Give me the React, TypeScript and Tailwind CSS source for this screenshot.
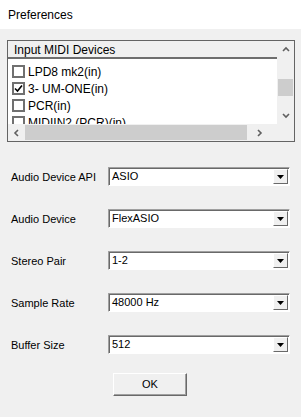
import React from 'react';

const devices = [
  { name: 'LPD8 mk2(in)', checked: false },
  { name: '3- UM-ONE(in)', checked: true },
  { name: 'PCR(in)', checked: false },
  { name: 'MIDIIN2 (PCR)(in)', checked: false },
];

const fields = [
  { label: 'Audio Device API', value: 'ASIO' },
  { label: 'Audio Device', value: 'FlexASIO' },
  { label: 'Stereo Pair', value: '1-2' },
  { label: 'Sample Rate', value: '48000 Hz' },
  { label: 'Buffer Size', value: '512' },
];

function Chevron({ dir }: { dir: 'up' | 'down' | 'left' | 'right' }) {
  const pts = {
    up: '1,5 4,2 7,5',
    down: '1,2 4,5 7,2',
    left: '5,1 2,4 5,7',
    right: '2,1 5,4 2,7',
  }[dir];
  return (
    <svg width="8" height="8" viewBox="0 0 8 8">
      <polyline points={pts} fill="none" stroke="#606060" strokeWidth="1.6" />
    </svg>
  );
}

function Checkbox({ checked }: { checked: boolean }) {
  return (
    <div className="w-[13px] h-[13px] border-2 border-[#707070] bg-white flex items-center justify-center shrink-0">
      {checked && (
        <svg width="9" height="9" viewBox="0 0 9 9">
          <polyline points="1,4.5 3.5,7 8,1.5" fill="none" stroke="#000" strokeWidth="1.6" />
        </svg>
      )}
    </div>
  );
}

function Combo({ value }: { value: string }) {
  return (
    <div className="w-[182px] h-[19px] border-t border-l border-[#a0a0a0] border-b border-r border-b-white border-r-white bg-white flex shadow-[inset_1px_1px_0_#696969]">
      <div className="flex-1 pl-[3px] pt-[1px] text-[11px] leading-[15px] text-black">{value}</div>
      <div className="w-[15px] h-[15px] mt-[1px] mr-[1px] bg-[#f0f0f0] border-t border-l border-white border-r border-b border-r-[#696969] border-b-[#696969] flex items-center justify-center">
        <svg width="7" height="4" viewBox="0 0 7 4">
          <polygon points="0,0 7,0 3.5,4" fill="#000" />
        </svg>
      </div>
    </div>
  );
}

export default function App() {
  return (
    <div className="w-[301px] h-[417px] bg-[#f0f0f0] flex flex-col" style={{ fontFamily: '"Liberation Sans", Arial, sans-serif' }}>
      <div className="h-[29px] bg-white pl-[8px] flex items-center text-[12px] text-black">Preferences</div>

      <div className="px-[7px] pt-[11px]">
        <div className="w-[288px] h-[102px] border border-[#646464] bg-[#f0f0f0] flex flex-col">
          <div className="flex h-[83px]">
            <div className="w-[269px] bg-white flex flex-col overflow-hidden">
              <div className="h-[18px] shrink-0 bg-[#f0f0f0] border-b-2 border-[#6e6e6e] pl-[6px] pt-[2px] text-[12px] leading-[14px] text-black">
                Input MIDI Devices
              </div>
              <div className="pt-[4px] flex flex-col">
                {devices.map(d => (
                  <div key={d.name} className="h-[17px] shrink-0 flex items-center gap-[3px] pl-[4px] text-[12px] text-black whitespace-nowrap">
                    <Checkbox checked={d.checked} />
                    <span>{d.name}</span>
                  </div>
                ))}
              </div>
            </div>
            <div className="w-[17px] flex flex-col items-center">
              <div className="h-[17px] flex items-center justify-center"><Chevron dir="up" /></div>
              <div className="h-[21px]" />
              <div className="w-[15px] h-[17px] bg-[#cdcdcd]" />
              <div className="flex-1" />
              <div className="h-[17px] flex items-center justify-center"><Chevron dir="down" /></div>
            </div>
          </div>
          <div className="flex h-[17px]">
            <div className="w-[17px] flex items-center justify-center"><Chevron dir="left" /></div>
            <div className="w-[222px] h-[15px] mt-[1px] bg-[#cdcdcd]" />
            <div className="flex-1 flex items-center justify-center pr-[4px]"><Chevron dir="right" /></div>
            <div className="w-[17px]" />
          </div>
        </div>
      </div>

      <div className="pl-[11px] pt-[25px] flex flex-col gap-[23px]">
        {fields.map(f => (
          <div key={f.label} className="flex items-center">
            <div className="w-[97px] pt-[2px] text-[11px] text-black">{f.label}</div>
            <Combo value={f.value} />
          </div>
        ))}
      </div>

      <div className="pl-[113px] pt-[19px]">
        <div className="w-[74px] h-[23px] bg-[#f0f0f0] border-t border-l border-white border-r border-b border-r-[#696969] border-b-[#696969] shadow-[inset_-1px_-1px_0_#a0a0a0] flex items-center justify-center text-[11px] text-black">
          OK
        </div>
      </div>
    </div>
  );
}
